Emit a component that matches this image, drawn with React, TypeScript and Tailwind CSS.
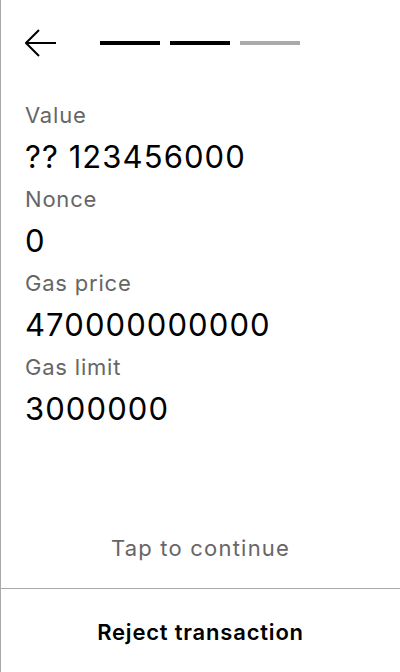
import React from 'react';

const fields = [
  { label: 'Value', value: '?? 123456000' },
  { label: 'Nonce', value: '0' },
  { label: 'Gas price', value: '470000000000' },
  { label: 'Gas limit', value: '3000000' },
];

const App = () => {
  return (
    <div
      className="flex flex-col w-[400px] h-[672px] bg-white border-l border-[#aaaaaa] text-black tracking-[0.05em]"
      style={{ fontFamily: 'Inter, "Noto Sans", sans-serif' }}
    >
      <div className="flex items-center pl-6 pt-[27px] h-[59px]">
        <button className="w-8 h-8 flex items-center justify-center">
          <svg width="32" height="32" viewBox="0 0 32 32" fill="none" stroke="#000" strokeWidth="2">
            <path d="M1 16H31" />
            <path d="M14 3L1 16L14 29" />
          </svg>
        </button>
        <div className="flex gap-2.5 ml-[43px]">
          <div className="w-[60px] h-1 bg-black" />
          <div className="w-[60px] h-1 bg-black" />
          <div className="w-[60px] h-1 bg-[#aaaaaa]" />
        </div>
      </div>

      <div className="flex flex-col gap-[10px] px-6 mt-[42px]">
        {fields.map((f) => (
          <div key={f.label} className="flex flex-col gap-[10px]">
            <div className="text-[22px] leading-[28px] text-[#666666]">{f.label}</div>
            <div className="text-[31px] leading-[36px] tracking-[0.035em]">{f.value}</div>
          </div>
        ))}
      </div>

      <div className="flex-1" />
      <div className="text-center text-[22px] leading-[28px] text-[#666666] tracking-[0.055em] pb-[26px]">Tap to continue</div>

      <div className="border-t border-[#aaaaaa] h-[84px] flex items-center justify-center pt-[3px]">
        <span className="text-[22px] font-semibold">Reject transaction</span>
      </div>
    </div>
  );
};

export default App;
